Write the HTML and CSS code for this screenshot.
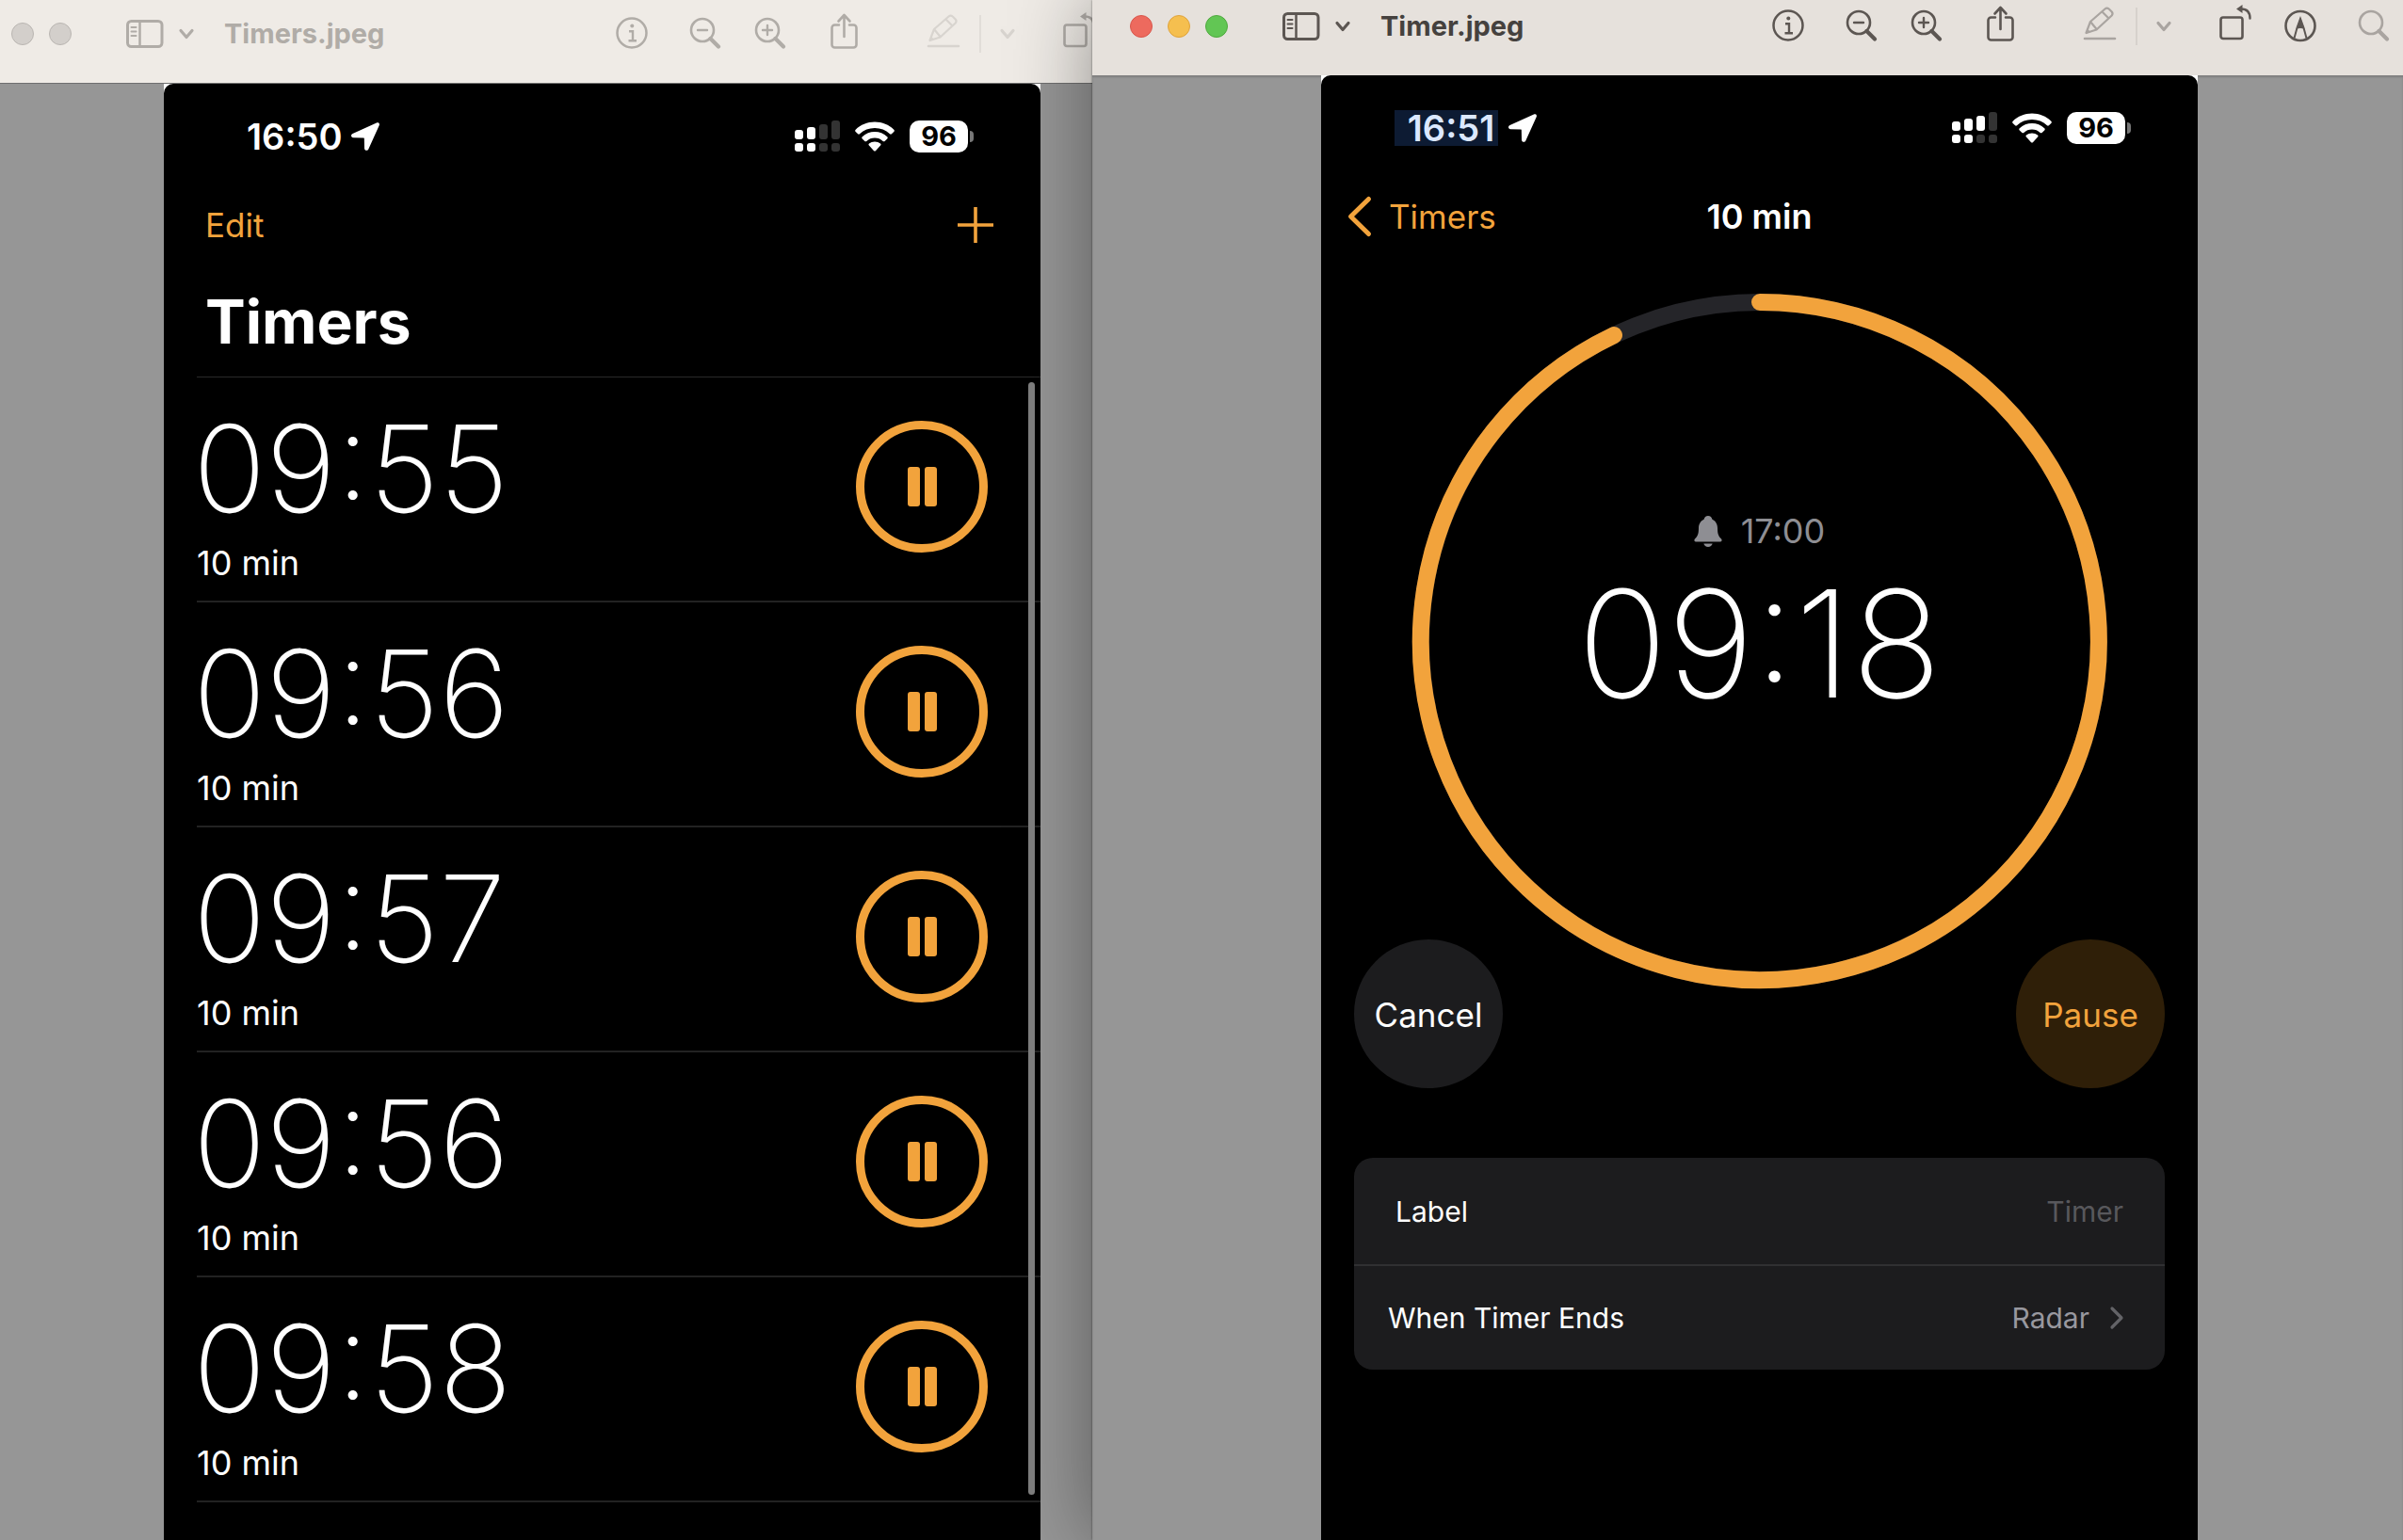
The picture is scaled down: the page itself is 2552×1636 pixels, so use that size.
FILE: index.html
```html
<!DOCTYPE html>
<html lang="en">
<head>
<meta charset="utf-8">
<title>Timers</title>
<link rel="stylesheet" href="styles.css">
</head>
<body>
<svg class="sprite" aria-hidden="true">
  <symbol id="sidebar" viewBox="0 0 40 44">
    <rect x="1.5" y="8.500" width="36.500" height="27" rx="4" fill="none" stroke="currentColor" stroke-width="3"/>
    <path d="M14.500 8v28" fill="none" stroke="currentColor" stroke-width="2.500"/>
    <path d="M5.500 15h5M5.500 19.500h5M5.500 24h5" fill="none" stroke="currentColor" stroke-width="2" stroke-linecap="round"/>
  </symbol>
  <symbol id="chevron-down" viewBox="0 0 16 44">
    <path d="M2 18.500l6 7 6-7" fill="none" stroke="currentColor" stroke-width="3.200" stroke-linecap="round" stroke-linejoin="round"/>
  </symbol>
  <symbol id="info" viewBox="0 0 36 44">
    <circle cx="18" cy="21" r="15.500" fill="none" stroke="currentColor" stroke-width="2.500"/>
    <circle cx="18.300" cy="13.500" r="2" fill="currentColor"/>
    <path d="M15 19.200h4v10M14.500 29.300h8.500" fill="none" stroke="currentColor" stroke-width="2.400"/>
  </symbol>
  <symbol id="search" viewBox="0 0 36 44">
    <circle cx="15" cy="18" r="12" fill="none" stroke="currentColor" stroke-width="2.600"/>
    <path d="M23.500 27l8.500 8.500" fill="none" stroke="currentColor" stroke-width="4.200" stroke-linecap="round"/>
  </symbol>
  <symbol id="zoom-out" viewBox="0 0 36 44">
    <use href="#search"/>
    <path d="M10 18h10" fill="none" stroke="currentColor" stroke-width="2.400" stroke-linecap="round"/>
  </symbol>
  <symbol id="zoom-in" viewBox="0 0 36 44">
    <use href="#search"/>
    <path d="M10 18h10M15 13v10" fill="none" stroke="currentColor" stroke-width="2.400" stroke-linecap="round"/>
  </symbol>
  <symbol id="share" viewBox="0 0 36 44">
    <path d="M13 12.500H8.500a3 3 0 0 0-3 3v18a3 3 0 0 0 3 3h20a3 3 0 0 0 3-3v-18a3 3 0 0 0-3-3H24M18.500 25V3M12.500 8.500l6-6.500 6 6.500" fill="none" stroke="currentColor" stroke-width="2.600" stroke-linecap="round" stroke-linejoin="round"/>
  </symbol>
  <symbol id="pencil" viewBox="0 0 36 44">
    <path d="M3.500 29l4.500-12L23.500 3.500c1.200-1 3-1 4.200 0l3 3c1 1.200 1 2.800 0 4L14.500 25.500zM8 17l7 8.500M20.500 6.500l7.500 7.500" fill="none" stroke="currentColor" stroke-width="2.200" stroke-linejoin="round"/>
    <path d="M3 30l1.500-5.500 4 3.500z" fill="currentColor"/>
    <path d="M2 35h32" stroke="currentColor" stroke-width="2.600" stroke-linecap="round"/>
  </symbol>
  <symbol id="rotate" viewBox="0 0 36 44">
    <rect x="2.500" y="12.500" width="23" height="22.500" rx="2.500" fill="none" stroke="currentColor" stroke-width="2.600"/>
    <path d="M19 3.500L25.500-1v9z" fill="currentColor"/>
    <path d="M24 3.500c6 0 9.500 3 9.500 10" fill="none" stroke="currentColor" stroke-width="2.400" stroke-linecap="round"/>
  </symbol>
  <symbol id="markup" viewBox="0 0 36 44">
    <circle cx="18" cy="21.500" r="15.500" fill="none" stroke="currentColor" stroke-width="2.600"/>
    <path d="M11.500 34.500L14.500 23.500 18 14l3.500 9.500 3 11" fill="none" stroke="currentColor" stroke-width="2"/>
    <path d="M18 12.500l4.500 12.500c-3-1.500-6-1.500-9 0z" fill="currentColor"/>
  </symbol>
  <symbol id="location" viewBox="0 0 30 30">
    <path d="M27.500.300L1.500 12C-.700 13-.300 16 2 16.200l11.300.300c.300 0 .500.200.500.500L14 27.500c.100 2.700 3.200 3.200 4.300.900L29.700 3.200C30.500 1.200 29.300-.400 27.500.300z" fill="currentColor"/>
  </symbol>
  <symbol id="wifi" viewBox="0 0 42 32">
    <path d="M21 0.500c8 0 15 3 20.300 8.200.7.700.7 1.500 0 2.200l-2.400 2.400c-.5.500-1.300.5-1.900 0C32.700 9.200 27.200 7 21 7S9.300 9.200 5 13.300c-.6.500-1.400.5-1.900 0L.7 10.900C0 10.200 0 9.400.7 8.700 6 3.500 13 .5 21 .5z" fill="currentColor"/>
    <path d="M21 11c5 0 9.600 1.900 13.200 5.200.7.600.7 1.500 0 2.200l-2.600 2.500c-.5.500-1.300.5-1.900 0C27.300 18.700 24.300 17.500 21 17.500s-6.300 1.200-8.700 3.400c-.6.500-1.400.5-1.900 0l-2.600-2.500c-.7-.7-.7-1.600 0-2.200C11.400 12.900 16 11 21 11z" fill="currentColor"/>
    <path d="M21 21.500c2.300 0 4.400.8 6 2.100.7.600.7 1.300.1 1.900l-5.200 5.700c-.5.500-1.300.5-1.800 0l-5.200-5.700c-.6-.6-.6-1.300.1-1.900 1.600-1.300 3.700-2.100 6-2.100z" fill="currentColor"/>
  </symbol>
  <symbol id="bell" viewBox="0 0 30 34">
    <path d="M15 1c2.300 0 4 1.500 4.400 3.700C23 6.300 25 9.800 25 14c0 6 1 8.500 3.800 11.200 1.500 1.600.7 3.300-1.300 3.300h-25c-2 0-2.800-1.700-1.300-3.300C4 22.500 5 20 5 14c0-4.200 2-7.700 5.600-9.300C11 2.500 12.700 1 15 1z" fill="currentColor"/>
    <path d="M10.300 30.500h9.400c-.5 2-2.400 3.400-4.700 3.400s-4.200-1.400-4.700-3.400z" fill="currentColor"/>
  </symbol>
</svg>

<main class="desktop">
  <section class="window window-back" aria-label="Timers.jpeg">
    <header class="toolbar">
      <div class="lights"><span class="light"></span><span class="light"></span></div>
      <button class="tool sidebar-tool" aria-label="Sidebar"><svg class="icon icon-wide"><use href="#sidebar"/></svg><svg class="icon icon-narrow"><use href="#chevron-down"/></svg></button>
      <h2 class="file-name">Timers.jpeg</h2>
      <div class="actions">
        <button class="tool" aria-label="Info"><svg class="icon"><use href="#info"/></svg></button>
        <div class="zoom-tools">
          <button class="tool" aria-label="Zoom out"><svg class="icon"><use href="#zoom-out"/></svg></button>
          <button class="tool" aria-label="Zoom in"><svg class="icon"><use href="#zoom-in"/></svg></button>
        </div>
        <button class="tool" aria-label="Share"><svg class="icon"><use href="#share"/></svg></button>
        <div class="highlight-tools">
          <button class="tool" aria-label="Highlight" disabled><svg class="icon"><use href="#pencil"/></svg></button>
          <span class="divider"></span>
          <button class="tool" aria-label="Highlight options" disabled><svg class="icon icon-narrow"><use href="#chevron-down"/></svg></button>
        </div>
        <div class="edit-tools">
          <button class="tool" aria-label="Rotate"><svg class="icon"><use href="#rotate"/></svg></button>
        </div>
      </div>
    </header>
    <div class="canvas">
      <div class="paper">
      <div class="phone">
        <div class="status">
          <span class="clock">16:50</span>
          <svg class="location"><use href="#location"/></svg>
          <div class="indicators">
            <svg class="signal" viewBox="0 0 48 34"><g fill="#fff"><rect y="10" width="9" height="10" rx="3"/><rect x="13" y="7" width="9" height="13" rx="3"/><rect y="24" width="9" height="9" rx="3"/><rect x="13" y="24" width="9" height="9" rx="3"/></g><g fill="#333"><rect x="26" y="4" width="9" height="16" rx="3"/><rect x="39" width="9" height="20" rx="3"/><rect x="26" y="24" width="9" height="9" rx="3"/><rect x="39" y="24" width="9" height="9" rx="3"/></g></svg>
            <svg class="wifi"><use href="#wifi"/></svg>
            <span class="battery"><span class="charge">96</span><span class="nub"></span></span>
          </div>
        </div>
        <nav class="nav">
          <button class="link">Edit</button>
          <button class="link add" aria-label="Add timer"><svg class="plus" viewBox="0 0 38 38"><path d="M19 0v38M0 19h38" stroke="currentColor" stroke-width="3.600"/></svg></button>
        </nav>
        <h1 class="heading">Timers</h1>
        <div class="list-area">
          <ul class="timers">
            <li class="timer"><div class="timer-text"><div class="remaining">09:55</div><div class="duration">10 min</div></div><button class="pause" aria-label="Pause"><span class="bar"></span><span class="bar"></span></button></li>
            <li class="timer"><div class="timer-text"><div class="remaining">09:56</div><div class="duration">10 min</div></div><button class="pause" aria-label="Pause"><span class="bar"></span><span class="bar"></span></button></li>
            <li class="timer"><div class="timer-text"><div class="remaining">09:57</div><div class="duration">10 min</div></div><button class="pause" aria-label="Pause"><span class="bar"></span><span class="bar"></span></button></li>
            <li class="timer"><div class="timer-text"><div class="remaining">09:56</div><div class="duration">10 min</div></div><button class="pause" aria-label="Pause"><span class="bar"></span><span class="bar"></span></button></li>
            <li class="timer"><div class="timer-text"><div class="remaining">09:58</div><div class="duration">10 min</div></div><button class="pause" aria-label="Pause"><span class="bar"></span><span class="bar"></span></button></li>
          </ul>
          <span class="scroll-thumb"></span>
        </div>
      </div>
      </div>
    </div>
  </section>

  <section class="window window-front" aria-label="Timer.jpeg">
    <header class="toolbar">
      <div class="lights"><span class="light light-close"></span><span class="light light-minimise"></span><span class="light light-zoom"></span></div>
      <button class="tool sidebar-tool" aria-label="Sidebar"><svg class="icon icon-wide"><use href="#sidebar"/></svg><svg class="icon icon-narrow"><use href="#chevron-down"/></svg></button>
      <h2 class="file-name">Timer.jpeg</h2>
      <div class="actions">
        <button class="tool" aria-label="Info"><svg class="icon"><use href="#info"/></svg></button>
        <div class="zoom-tools">
          <button class="tool" aria-label="Zoom out"><svg class="icon"><use href="#zoom-out"/></svg></button>
          <button class="tool" aria-label="Zoom in"><svg class="icon"><use href="#zoom-in"/></svg></button>
        </div>
        <button class="tool" aria-label="Share"><svg class="icon"><use href="#share"/></svg></button>
        <div class="highlight-tools">
          <button class="tool" aria-label="Highlight" disabled><svg class="icon"><use href="#pencil"/></svg></button>
          <span class="divider"></span>
          <button class="tool" aria-label="Highlight options" disabled><svg class="icon icon-narrow"><use href="#chevron-down"/></svg></button>
        </div>
        <div class="edit-tools">
          <button class="tool" aria-label="Rotate"><svg class="icon"><use href="#rotate"/></svg></button>
          <button class="tool" aria-label="Markup"><svg class="icon"><use href="#markup"/></svg></button>
        </div>
        <button class="tool" aria-label="Search" disabled><svg class="icon"><use href="#search"/></svg></button>
      </div>
    </header>
    <div class="canvas">
      <div class="paper">
      <div class="phone">
        <div class="status">
          <span class="clock clock-selected">16:51</span>
          <svg class="location"><use href="#location"/></svg>
          <div class="indicators">
            <svg class="signal" viewBox="0 0 48 34"><g fill="#fff"><rect y="10" width="9" height="10" rx="3"/><rect x="13" y="7" width="9" height="13" rx="3"/><rect x="26" y="4" width="9" height="16" rx="3"/><rect y="24" width="9" height="9" rx="3"/><rect x="13" y="24" width="9" height="9" rx="3"/></g><g fill="#333"><rect x="39" width="9" height="20" rx="3"/><rect x="26" y="24" width="9" height="9" rx="3"/><rect x="39" y="24" width="9" height="9" rx="3"/></g></svg>
            <svg class="wifi"><use href="#wifi"/></svg>
            <span class="battery"><span class="charge">96</span><span class="nub"></span></span>
          </div>
        </div>
        <nav class="nav nav-detail">
          <a class="link back" href="#timers"><svg class="back-arrow" viewBox="0 0 26 42"><path d="M22.500 2.500L3.500 21l19 18.500" fill="none" stroke="currentColor" stroke-width="5" stroke-linecap="round" stroke-linejoin="round"/></svg>Timers</a>
          <h1 class="nav-title">10 min</h1>
        </nav>
        <div class="dial">
          <svg class="ring" viewBox="0 0 738 738">
            <circle cx="369" cy="369" r="360" fill="none" stroke="#252529" stroke-width="18"/>
            <path d="M369 9A360 360 0 1 1 214 44" fill="none" stroke="#f2a33c" stroke-width="18" stroke-linecap="round"/>
          </svg>
          <div class="readout">
            <div class="alarm"><svg class="bell"><use href="#bell"/></svg>17:00</div>
            <div class="countdown">09:18</div>
          </div>
        </div>
        <div class="controls">
          <button class="round round-cancel">Cancel</button>
          <button class="round round-pause">Pause</button>
        </div>
        <form class="card">
          <div class="field"><label for="label">Label</label><input id="label" type="text" placeholder="Timer"></div>
          <button type="button" class="field field-link"><span>When Timer Ends</span><span class="value">Radar<svg class="disclosure" viewBox="0 0 14 24"><path d="M2 2l10 10L2 22" fill="none" stroke="currentColor" stroke-width="3.200" stroke-linecap="round" stroke-linejoin="round"/></svg></span></button>
        </form>
      </div>
      </div>
    </div>
  </section>
</main>
</body>
</html>
```
FILE: styles.css
```css
* {
  box-sizing: border-box;
}

body {
  margin: 0;
  background: #969696;
  color: #fff;
  font-family: Inter, "Liberation Sans", sans-serif;
}

h1, h2, ul {
  margin: 0;
  padding: 0;
}

button, input {
  margin: 0;
  padding: 0;
  border: 0;
  background: none;
  color: inherit;
  font: inherit;
}

svg {
  display: block;
  flex: none;
  overflow: visible;
}

.sprite {
  position: absolute;
  width: 0;
  height: 0;
}

symbol {
  overflow: visible;
}

/* Windows */
.desktop {
  display: grid;
  grid-template-columns: 1160fr 1392fr;
  height: 100vh;
  overflow: hidden;
}

.window {
  display: flex;
  flex-direction: column;
  min-width: 0;
}

.window-back {
  overflow: hidden;
}

.window-front {
  position: relative;
  box-shadow: 0 0 80px rgba(0, 0, 0, 0.4), 0 0 2px rgba(0, 0, 0, 0.5);
}

.toolbar {
  display: flex;
  flex: none;
  align-items: center;
}

.window-back .toolbar {
  height: 89px;
  padding: 0 0 16px 12px;
  border-bottom: 1px solid #6f6f6f;
  background: #efebe6;
  color: #b0aca7;
}

.window-front .toolbar {
  height: 80px;
  padding: 0 13px 24px 40px;
  background: #e6e1dc;
  color: #5c5652;
}

.lights {
  display: flex;
  gap: 16px;
}

.light {
  width: 24px;
  height: 24px;
  border: 1px solid #bab6b2;
  border-radius: 50%;
  background: #d3cfcb;
}

.light-close {
  border-color: #d8564b;
  background: #ed6a5e;
}

.light-minimise {
  border-color: #dfa33c;
  background: #f5bf4f;
}

.light-zoom {
  border-color: #4fa93e;
  background: #62c654;
}

.tool {
  display: flex;
}

.tool:disabled {
  color: #a9a4a0;
}

.window-back .tool:disabled {
  color: #d8d4cf;
}

.sidebar-tool {
  gap: 16px;
  margin: 0 32px 0 58px;
}

.icon {
  width: 36px;
  height: 44px;
}

.icon-wide {
  width: 40px;
}

.icon-narrow {
  width: 16px;
}

.file-name {
  font-size: 29px;
  font-weight: 700;
  line-height: 40px;
}

.window-front .file-name {
  color: #45413e;
}

.actions {
  display: flex;
  align-items: center;
  gap: 42px;
  margin-left: auto;
}

.window-back .actions {
  margin-right: -4px;
}

.zoom-tools, .edit-tools {
  display: flex;
  gap: 33px;
}

.highlight-tools {
  display: flex;
  align-items: center;
  gap: 20px;
  margin: 0 8px 0 28px;
}

.divider {
  width: 2px;
  height: 40px;
  background: #d6d1cc;
}

.window-back .divider {
  background: #e1ddd8;
}

.canvas {
  display: grid;
  flex: 1;
  background: #969696;
}

.window-back .canvas {
  grid-template-columns: 174fr 931fr 55fr;
}

.window-front .canvas {
  grid-template-columns: 243fr 931fr 218fr;
  box-shadow: inset 0 2px 2px #7e7e7e;
}

.paper {
  grid-column: 2;
  background: #fff;
}

.phone {
  height: 100%;
  border-radius: 10px 10px 0 0;
  background: #000;
}

/* Status bar */
.status {
  display: flex;
  align-items: center;
  height: 111px;
  padding: 0 71px 0 78px;
}

.clock {
  width: 110px;
  margin-right: 11px;
  padding-left: 10px;
  font-size: 38px;
  font-weight: 600;
  line-height: 38px;
  text-align: center;
}

.clock-selected {
  background: #0d1b33;
  color: #dbe8ff;
}

.location {
  width: 30px;
  height: 30px;
}

.indicators {
  display: flex;
  align-items: center;
  gap: 16px;
  margin-left: auto;
}

.signal {
  width: 48px;
  height: 34px;
}

.wifi {
  width: 42px;
  height: 32px;
}

.battery {
  display: flex;
  align-items: center;
  gap: 2px;
}

.charge {
  width: 62px;
  border-radius: 10px;
  background: #fff;
  color: #000;
  font-size: 29px;
  font-weight: 700;
  line-height: 34px;
  text-align: center;
}

.nub {
  width: 4px;
  height: 12px;
  border-radius: 0 4px 4px 0;
  background: #777;
}

/* Navigation */
.nav {
  display: flex;
  align-items: center;
  justify-content: space-between;
  height: 77px;
  padding: 0 50px 0 44px;
}

.link {
  color: #f2a33c;
  font-size: 35px;
  line-height: 44px;
  text-decoration: none;
}

.plus {
  width: 38px;
  height: 38px;
}

.nav-detail {
  display: grid;
  grid-template-columns: 1fr auto 1fr;
  padding: 0 28px;
}

.back {
  display: flex;
  align-items: center;
  gap: 18px;
}

.back-arrow {
  width: 26px;
  height: 42px;
}

.nav-title {
  font-size: 36px;
  font-weight: 600;
  line-height: 44px;
}

/* Timer list */
.heading {
  padding: 25px 44px 18px;
  font-size: 64px;
  font-weight: 700;
  line-height: 80px;
}

.list-area {
  position: relative;
}

.timers {
  margin-left: 35px;
  border-top: 1px solid #2a2a2a;
  list-style: none;
}

.timer {
  display: flex;
  align-items: flex-start;
  justify-content: space-between;
  height: 239px;
  padding: 46px 56px 0 0;
  border-bottom: 2px solid #222;
}

.timer-text {
  padding-top: 3px;
}

.remaining {
  margin-left: -4px;
  font-size: 128px;
  font-weight: 250;
  line-height: 96px;
}

.duration {
  margin-top: 32px;
  font-size: 36px;
  line-height: 40px;
}

.pause {
  display: flex;
  align-items: center;
  justify-content: center;
  gap: 5px;
  width: 140px;
  height: 140px;
  border: 9px solid #f2a33c;
  border-radius: 50%;
}

.bar {
  width: 13px;
  height: 42px;
  border-radius: 3px;
  background: #f2a33c;
}

.scroll-thumb {
  position: absolute;
  top: 6px;
  right: 6px;
  bottom: 8px;
  width: 7px;
  border-radius: 4px;
  background: #7f7f7f;
}

/* Timer detail */
.dial {
  display: grid;
  justify-content: center;
  padding-top: 44px;
}

.ring, .readout {
  grid-area: 1 / 1;
}

.ring {
  width: 738px;
  height: 738px;
}

.readout {
  padding-top: 230px;
  text-align: center;
}

.alarm {
  display: flex;
  align-items: center;
  justify-content: center;
  gap: 20px;
  color: #8e8e93;
  font-size: 36px;
  line-height: 44px;
}

.bell {
  width: 30px;
  height: 34px;
}

.countdown {
  margin-top: 40px;
  font-size: 158px;
  font-weight: 200;
  line-height: 116px;
}

.controls {
  display: flex;
  justify-content: space-between;
  margin-top: -52px;
  padding: 0 35px;
}

.round {
  position: relative;
  width: 158px;
  height: 158px;
  padding-top: 2px;
  border-radius: 50%;
  font-size: 35px;
}

.round-cancel {
  background: #1c1c1e;
}

.round-pause {
  background: #2f1f08;
  color: #f2a33c;
}

.card {
  margin: 74px 35px 0;
  border-radius: 20px;
  background: #1c1c1e;
  font-size: 30px;
}

.field {
  display: flex;
  align-items: center;
  justify-content: space-between;
  width: 100%;
  height: 113px;
  padding: 0 44px;
}

.field input {
  width: 200px;
  text-align: right;
}

.field input::placeholder {
  color: #58585c;
  opacity: 1;
}

.field-link {
  height: 112px;
  padding-left: 36px;
  border-top: 2px solid #303032;
}

.value {
  display: flex;
  align-items: center;
  gap: 22px;
  color: #98989f;
}

.disclosure {
  width: 14px;
  height: 24px;
  color: #636367;
}
```
